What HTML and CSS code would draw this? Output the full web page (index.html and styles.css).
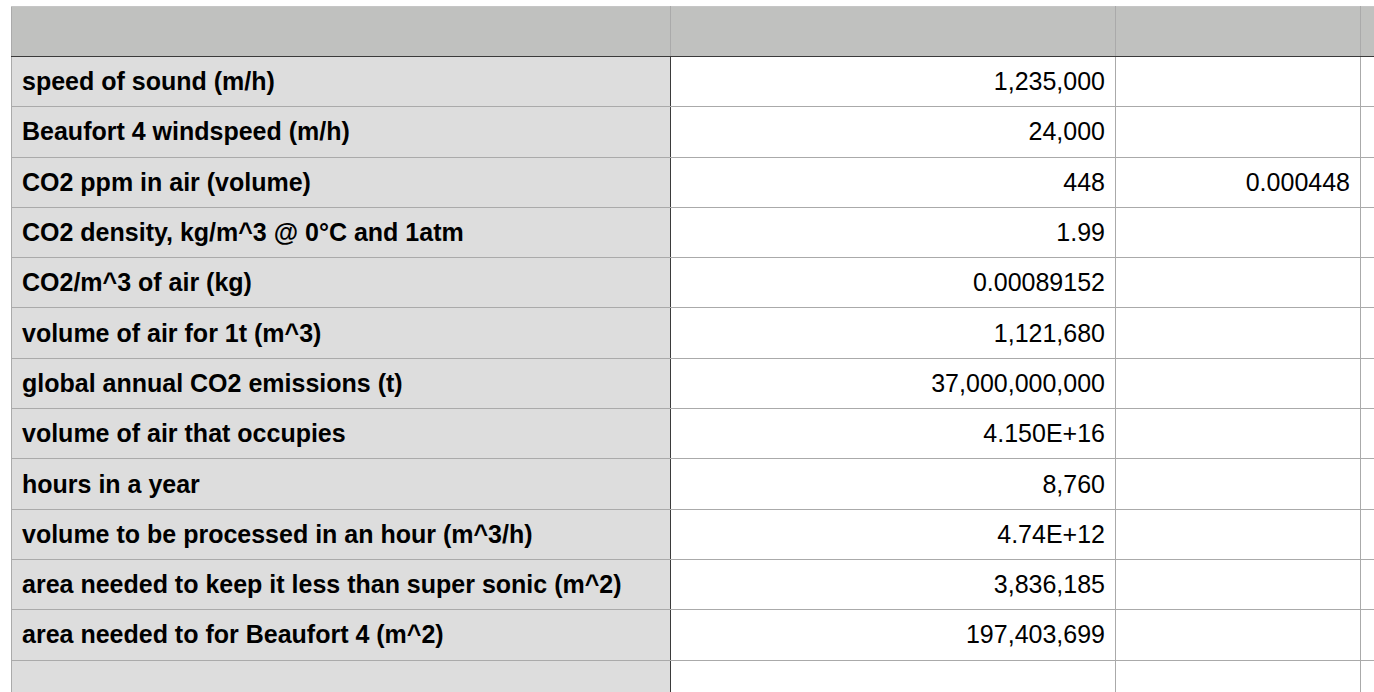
FILE: index.html
```html
<!DOCTYPE html>
<html>
<head>
<meta charset="utf-8">
<link rel="stylesheet" href="styles.css">
</head>
<body>
<div class="sheet">
<table class="grid">
<colgroup>
<col class="c1"><col class="c2"><col class="c3"><col class="c4">
</colgroup>
<thead>
<tr class="head"><th></th><th></th><th></th><th></th></tr>
</thead>
<tbody>
<tr><td class="label">speed of sound (m/h)</td><td class="num">1,235,000</td><td class="num"></td><td></td></tr>
<tr><td class="label">Beaufort 4 windspeed (m/h)</td><td class="num">24,000</td><td class="num"></td><td></td></tr>
<tr><td class="label">CO2 ppm in air (volume)</td><td class="num">448</td><td class="num">0.000448</td><td></td></tr>
<tr><td class="label">CO2 density, kg/m^3 @ 0°C and 1atm</td><td class="num">1.99</td><td class="num"></td><td></td></tr>
<tr><td class="label">CO2/m^3 of air (kg)</td><td class="num">0.00089152</td><td class="num"></td><td></td></tr>
<tr><td class="label">volume of air for 1t (m^3)</td><td class="num">1,121,680</td><td class="num"></td><td></td></tr>
<tr><td class="label">global annual CO2 emissions (t)</td><td class="num">37,000,000,000</td><td class="num"></td><td></td></tr>
<tr><td class="label">volume of air that occupies</td><td class="num">4.150E+16</td><td class="num"></td><td></td></tr>
<tr><td class="label">hours in a year</td><td class="num">8,760</td><td class="num"></td><td></td></tr>
<tr><td class="label">volume to be processed in an hour (m^3/h)</td><td class="num">4.74E+12</td><td class="num"></td><td></td></tr>
<tr><td class="label">area needed to keep it less than super sonic (m^2)</td><td class="num">3,836,185</td><td class="num"></td><td></td></tr>
<tr><td class="label">area needed to for Beaufort 4 (m^2)</td><td class="num">197,403,699</td><td class="num"></td><td></td></tr>
<tr><td class="label"></td><td class="num"></td><td class="num"></td><td></td></tr>
</tbody>
</table>
</div>
</body>
</html>
```

FILE: styles.css
```css
html, body {
  margin: 0;
  padding: 0;
  background: #ffffff;
  overflow: hidden;
}
.sheet {
  padding: 6px 0 0 11px;
  width: 1374px;
  height: 692px;
  box-sizing: border-box;
  overflow: hidden;
}
.grid {
  border-collapse: collapse;
  table-layout: fixed;
  width: 1450px;
  font-family: "Liberation Sans", Arial, Helvetica, sans-serif;
  font-size: 25px;
  color: #000;
}
.c1 { width: 659px; }
.c2 { width: 445px; }
.c3 { width: 245px; }
.c4 { width: 101px; }
.grid th, .grid td {
  border: 1px solid #aaaaaa;
  padding: 0 10px;
  height: 50.3px;
  box-sizing: border-box;
  white-space: nowrap;
  overflow: hidden;
  vertical-align: middle;
}
.head th {
  background: #c0c1bf;
  height: 50px;
  border-top: 1px solid #c6c6c6;
  border-bottom: 1px solid #3a3a3a;
}
.label {
  background: #dddddd;
  font-weight: bold;
  text-align: left;
  border-right: 1px solid #3a3a3a !important;
}
.num {
  text-align: right;
}
```
